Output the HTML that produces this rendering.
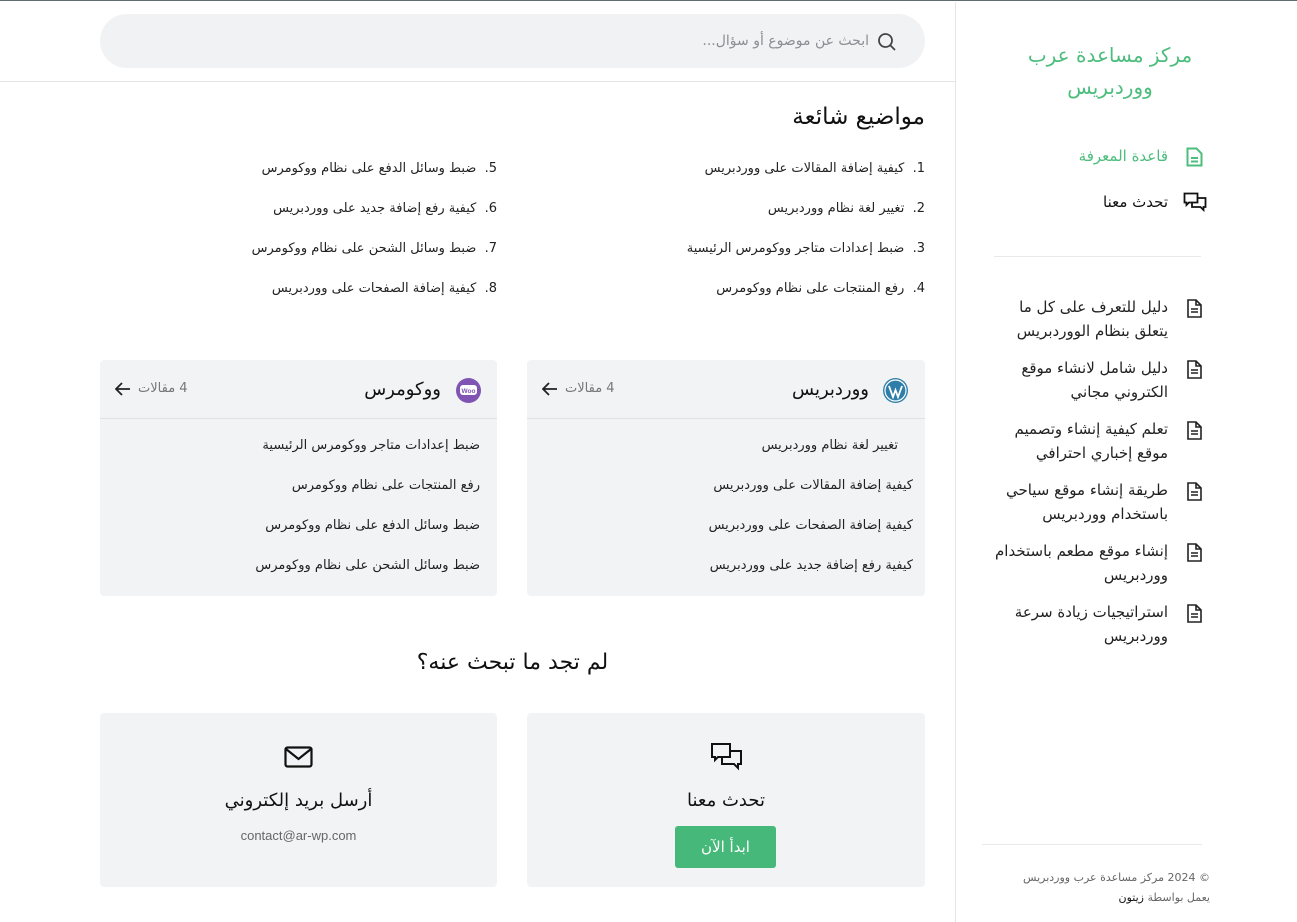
<!DOCTYPE html>
<html dir="rtl"><head><meta charset="utf-8"><style>
*{box-sizing:border-box;margin:0;padding:0}
body{width:1297px;height:921px;position:relative;background:#fff;font-family:"DejaVu Sans","Liberation Sans",sans-serif;color:#222;overflow:hidden;border-top:1px solid #5f6b73}
.a{position:absolute;white-space:nowrap}
.side{position:absolute;left:955px;top:1px;width:342px;height:920px;border-left:1px solid #e3e5e8}
.search{position:absolute;left:100px;top:13px;width:825px;height:54px;border-radius:27px;background:#f1f2f4}
.hr{position:absolute;left:0;top:80px;width:955px;height:1px;background:#e3e5e8}
.li{font-size:13px;color:#222}
.card{position:absolute;background:#f2f3f5;border-radius:4px}
.ch{position:absolute;left:0;right:0;top:0;height:59px;border-bottom:1px solid #dfe1e4}
.art{font-size:15px;line-height:24px;color:#222;text-align:right}
</style></head><body>
<div class="search"></div>
<svg class="a" style="left:877px;top:31px" width="20" height="20" viewBox="0 0 20 20"><circle cx="8.5" cy="8.5" r="6.5" fill="none" stroke="#444" stroke-width="1.8"/><path d="M13 13l5 5" stroke="#444" stroke-width="1.8"/></svg>
<div class="a" style="right:428px;top:32px;font-size:14px;color:#8a8f95">ابحث عن موضوع أو سؤال...</div>
<div class="hr"></div>

<div class="a" style="right:372px;top:103px;font-size:23px;color:#111">مواضيع شائعة</div>
<div class="a li" style="right:372px;top:160px">1.&nbsp; كيفية إضافة المقالات على ووردبريس</div>
<div class="a li" style="right:372px;top:200px">2.&nbsp; تغيير لغة نظام ووردبريس</div>
<div class="a li" style="right:372px;top:240px">3.&nbsp; ضبط إعدادات متاجر ووكومرس الرئيسية</div>
<div class="a li" style="right:372px;top:280px">4.&nbsp; رفع المنتجات على نظام ووكومرس</div>
<div class="a li" style="right:800px;top:160px">5.&nbsp; ضبط وسائل الدفع على نظام ووكومرس</div>
<div class="a li" style="right:800px;top:200px">6.&nbsp; كيفية رفع إضافة جديد على ووردبريس</div>
<div class="a li" style="right:800px;top:240px">7.&nbsp; ضبط وسائل الشحن على نظام ووكومرس</div>
<div class="a li" style="right:800px;top:280px">8.&nbsp; كيفية إضافة الصفحات على ووردبريس</div>

<div class="card" style="left:527px;top:359px;width:398px;height:236px">
 <div class="ch"></div>
 <svg class="a" style="left:355px;top:17px" width="27" height="27" viewBox="0 0 27 27"><circle cx="13.5" cy="13.5" r="12.5" fill="#2f7ea9"/><circle cx="13.5" cy="13.5" r="10.5" fill="none" stroke="#fff" stroke-width="1.2"/><path d="M7 9l4 11 2.5-7 2.5 7 4-11" fill="none" stroke="#fff" stroke-width="1.8"/></svg>
 <div class="a" style="right:56px;top:19px;font-size:18px;color:#111">ووردبريس</div>
 <div class="a" style="left:38px;top:21px;font-size:13px;color:#777">4 مقالات</div>
 <svg class="a" style="left:15px;top:22px" width="16" height="14" viewBox="0 0 16 14"><path d="M15 7H2M7 1L1 7l6 6" fill="none" stroke="#222" stroke-width="1.8"/></svg>
 <div class="a li" style="right:27px;top:78px">تغيير لغة نظام ووردبريس</div>
 <div class="a li" style="right:12px;top:118px">كيفية إضافة المقالات على ووردبريس</div>
 <div class="a li" style="right:12px;top:158px">كيفية إضافة الصفحات على ووردبريس</div>
 <div class="a li" style="right:12px;top:198px">كيفية رفع إضافة جديد على ووردبريس</div>
</div>
<div class="card" style="left:100px;top:359px;width:397px;height:236px">
 <div class="ch"></div>
 <svg class="a" style="left:355px;top:17px" width="27" height="27" viewBox="0 0 27 27"><circle cx="13.5" cy="13.5" r="12.5" fill="#7f54b3"/><rect x="5" y="8" width="17" height="10" rx="3" fill="#fff"/><text x="13.5" y="16" font-size="6.5" font-family="Liberation Sans" font-weight="bold" fill="#7f54b3" text-anchor="middle">Woo</text></svg>
 <div class="a" style="right:56px;top:19px;font-size:18px;color:#111">ووكومرس</div>
 <div class="a" style="left:38px;top:21px;font-size:13px;color:#777">4 مقالات</div>
 <svg class="a" style="left:15px;top:22px" width="16" height="14" viewBox="0 0 16 14"><path d="M15 7H2M7 1L1 7l6 6" fill="none" stroke="#222" stroke-width="1.8"/></svg>
 <div class="a li" style="right:17px;top:78px">ضبط إعدادات متاجر ووكومرس الرئيسية</div>
 <div class="a li" style="right:17px;top:118px">رفع المنتجات على نظام ووكومرس</div>
 <div class="a li" style="right:17px;top:158px">ضبط وسائل الدفع على نظام ووكومرس</div>
 <div class="a li" style="right:17px;top:198px">ضبط وسائل الشحن على نظام ووكومرس</div>
</div>

<div class="a" style="left:100px;width:825px;text-align:center;top:649px;font-size:22px;color:#111">لم تجد ما تبحث عنه؟</div>

<div class="card" style="left:527px;top:712px;width:398px;height:174px">
 <svg class="a" style="left:183px;top:29px" width="33" height="29" viewBox="0 0 33 29"><path d="M2 2h18v13H8l-3 3v-3H2z" fill="none" stroke="#111" stroke-width="2"/><path d="M20 9h11v13h-3v4l-4-4H12v-7" fill="none" stroke="#111" stroke-width="2"/></svg>
 <div class="a" style="left:0;right:0;text-align:center;top:77px;font-size:18px;color:#111">تحدث معنا</div>
 <div class="a" style="left:148px;top:113px;width:101px;height:42px;background:#46b97a;border-radius:3px;color:#fff;font-size:15px;text-align:center;line-height:42px">ابدأ الآن</div>
</div>
<div class="card" style="left:100px;top:712px;width:397px;height:174px">
 <svg class="a" style="left:184px;top:33px" width="29" height="22" viewBox="0 0 29 22"><rect x="1.5" y="1.5" width="26" height="19" rx="2" fill="none" stroke="#111" stroke-width="2.2"/><path d="M2 3l12.5 10L27 3" fill="none" stroke="#111" stroke-width="2.2"/></svg>
 <div class="a" style="left:0;right:0;text-align:center;top:77px;font-size:18px;color:#111">أرسل بريد إلكتروني</div>
 <div class="a" style="left:0;right:0;text-align:center;top:115px;font-size:13px;color:#666;font-family:'Liberation Sans',sans-serif">contact@ar-wp.com</div>
</div>

<div class="side">
 <div class="a" style="left:8px;width:292px;text-align:center;top:37px;font-size:20px;line-height:32px;color:#4dbd7e;white-space:normal;padding:0 50px">مركز مساعدة عرب ووردبريس</div>
 <svg class="a" style="left:230px;top:145px" width="17" height="20" viewBox="0 0 17 20"><path d="M1.5 1.5h9l5 5v12h-14z" fill="none" stroke="#4dbd7e" stroke-width="2"/><path d="M5 11h7M5 14.5h7" stroke="#4dbd7e" stroke-width="2"/></svg>
 <div class="a" style="right:129px;top:145px;font-size:15px;color:#4dbd7e">قاعدة المعرفة</div>
 <svg class="a" style="left:227px;top:190px" width="24" height="22" viewBox="0 0 24 22"><path d="M1.5 1.5h13v9H6l-2.5 2.5v-2.5h-2z" fill="none" stroke="#111" stroke-width="1.8"/><path d="M14.5 6h8v9h-2v3l-3-3H9v-4.5" fill="none" stroke="#111" stroke-width="1.8"/></svg>
 <div class="a" style="right:129px;top:191px;font-size:15px;color:#111">تحدث معنا</div>
 <div class="a" style="left:38px;top:254px;width:207px;height:1px;background:#e8e9eb"></div>
 <div class="a art" style="right:129px;top:293px">دليل للتعرف على كل ما<br>يتعلق بنظام الووردبريس</div>
 <div class="a art" style="right:129px;top:354px">دليل شامل لانشاء موقع<br>الكتروني مجاني</div>
 <div class="a art" style="right:129px;top:415px">تعلم كيفية إنشاء وتصميم<br>موقع إخباري احترافي</div>
 <div class="a art" style="right:129px;top:476px">طريقة إنشاء موقع سياحي<br>باستخدام ووردبريس</div>
 <div class="a art" style="right:129px;top:537px">إنشاء موقع مطعم باستخدام<br>ووردبريس</div>
 <div class="a art" style="right:129px;top:598px">استراتيجيات زيادة سرعة<br>ووردبريس</div>
 <svg class="a" style="left:231px;top:297px" width="15" height="19" viewBox="0 0 15 19"><path d="M1 1h8l5 5v12H1z M9 1v5h5 M4 10h7M4 13h7" fill="none" stroke="#222" stroke-width="1.6"/></svg>
 <svg class="a" style="left:231px;top:358px" width="15" height="19" viewBox="0 0 15 19"><path d="M1 1h8l5 5v12H1z M9 1v5h5 M4 10h7M4 13h7" fill="none" stroke="#222" stroke-width="1.6"/></svg>
 <svg class="a" style="left:231px;top:419px" width="15" height="19" viewBox="0 0 15 19"><path d="M1 1h8l5 5v12H1z M9 1v5h5 M4 10h7M4 13h7" fill="none" stroke="#222" stroke-width="1.6"/></svg>
 <svg class="a" style="left:231px;top:480px" width="15" height="19" viewBox="0 0 15 19"><path d="M1 1h8l5 5v12H1z M9 1v5h5 M4 10h7M4 13h7" fill="none" stroke="#222" stroke-width="1.6"/></svg>
 <svg class="a" style="left:231px;top:541px" width="15" height="19" viewBox="0 0 15 19"><path d="M1 1h8l5 5v12H1z M9 1v5h5 M4 10h7M4 13h7" fill="none" stroke="#222" stroke-width="1.6"/></svg>
 <svg class="a" style="left:231px;top:602px" width="15" height="19" viewBox="0 0 15 19"><path d="M1 1h8l5 5v12H1z M9 1v5h5 M4 10h7M4 13h7" fill="none" stroke="#222" stroke-width="1.6"/></svg>
 <div class="a" style="left:26px;top:842px;width:220px;height:1px;background:#e8e9eb"></div>
 <div class="a" style="right:87px;top:869px;font-size:11px;color:#666">© 2024 مركز مساعدة عرب ووردبريس</div>
 <div class="a" style="right:87px;top:889px;font-size:11px;color:#666">يعمل بواسطة <span style="color:#111">زيتون</span></div>
</div>
</body></html>
